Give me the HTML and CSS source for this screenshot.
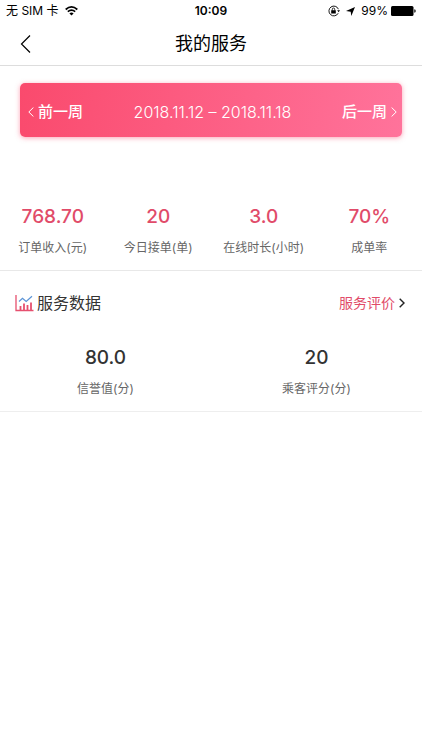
FILE: index.html
```
<!DOCTYPE html>
<html lang="zh-CN">
<head>
<meta charset="utf-8">
<meta name="viewport" content="width=device-width, initial-scale=1">
<title>我的服务</title>
<link rel="stylesheet" href="styles.css">
</head>
<body>
<div class="status">
  <div class="status-side">
    <span>无 SIM 卡</span>
    <svg width="13" height="10" viewBox="0 0 13 10" aria-hidden="true"><path d="M.7 3.5Q6.5-1.6 12.3 3.5M2.8 5.7Q6.5 2.6 10.2 5.7" fill="none" stroke="#000" stroke-width="1.7"/><path d="M4.4 7.4Q6.5 5.8 8.6 7.4L6.5 9.6Z"/></svg>
  </div>
  <time class="clock">10:09</time>
  <div class="status-side status-right">
    <svg class="lock" width="12" height="12" viewBox="0 0 12 12" aria-hidden="true"><path d="M10.4 4.2A4.9 4.9 0 1 0 10.2 8.2" fill="none" stroke="#000" stroke-width=".9"/><path d="M9.2 5.2h2.8l-1.4 2zM3.2 5.2h4.600v3.400H3.200z"/><path d="M4.300 5.6V4.200a1.2 1.2 0 0 1 2.4 0v1.4" fill="none" stroke="#000" stroke-width=".8"/></svg>
    <svg class="arrow" width="9" height="9" viewBox="0 0 9 9" aria-hidden="true"><path d="M9 0 5.300 9 4.700 4.700 0 4.100Z"/></svg>
    <span>99%</span>
    <svg width="25" height="10" viewBox="0 0 25 10" aria-hidden="true"><rect width="22.500" height="10" rx="1.500"/><path d="M23.300 3.300q1.400.2 1.400 1.700t-1.400 1.700z"/></svg>
  </div>
</div>
<header class="nav">
  <button class="back" type="button" aria-label="返回"><svg width="12" height="20" viewBox="0 0 12 20"><path d="M10 1.500 1.500 10 10 18.500" fill="none" stroke="currentColor" stroke-width="1.200"/></svg></button>
  <h1>我的服务</h1>
</header>
<main>
  <div class="week">
    <button type="button"><svg width="6" height="10" viewBox="0 0 6 10" aria-hidden="true"><path d="M5.400.5.800 5l4.600 4.500" fill="none" stroke="currentColor"/></svg>前一周</button>
    <span class="range">2018.11.12 – 2018.11.18</span>
    <button type="button">后一周<svg width="6" height="10" viewBox="0 0 6 10" aria-hidden="true"><path d="M.6.5 5.200 5 .6 9.500" fill="none" stroke="currentColor"/></svg></button>
  </div>
  <dl class="stats income">
    <div><dt>订单收入(元)</dt><dd>768.70</dd></div>
    <div><dt>今日接单(单)</dt><dd>20</dd></div>
    <div><dt>在线时长(小时)</dt><dd>3.0</dd></div>
    <div><dt>成单率</dt><dd>70%</dd></div>
  </dl>
  <section>
    <div class="section-head">
      <svg width="19" height="18" viewBox="0 0 19 18" aria-hidden="true"><path d="M1 1v15.500h17.500" fill="none" stroke="#e6506f" stroke-width="1.300"/><path d="M5.500 16v-4M9 16V9.500M12.500 16v-5M16 16V8.500" stroke="#e6506f" stroke-width="1.800"/><path d="m4 7.500 3.500-3.300 3.700 3.300L17 2.200" fill="none" stroke="#5b94d6" stroke-width="1.200"/></svg>
      <h2>服务数据</h2>
      <a href="#reviews">服务评价<svg width="6" height="10" viewBox="0 0 6 10" aria-hidden="true"><path d="M.7.800 5 5 .7 9.200" fill="none" stroke="#222" stroke-width="1.400"/></svg></a>
    </div>
    <dl class="stats score">
      <div><dt>信誉值(分)</dt><dd>80.0</dd></div>
      <div><dt>乘客评分(分)</dt><dd>20</dd></div>
    </dl>
  </section>
</main>
</body>
</html>
```
FILE: styles.css
```
* {
  box-sizing: border-box;
}

body {
  margin: 0;
  background: #fff;
  color: #333;
  font-family: Inter, "Noto Sans CJK SC", sans-serif;
}

svg {
  display: block;
  flex: none;
}

h1, h2, dl, dd {
  margin: 0;
}

h1, h2 {
  font-weight: 400;
}

button {
  padding: 0;
  border: 0;
  background: none;
  color: inherit;
  font: inherit;
}

.status {
  display: grid;
  grid-template-columns: 1fr auto 1fr;
  align-items: center;
  height: 22px;
  padding: 0 6px;
  color: #000;
  font-size: 12px;
  line-height: 20px;
}

.status-side {
  display: flex;
  align-items: center;
  gap: 6px;
}

.status-right {
  justify-content: flex-end;
  gap: 3px;
}

.arrow {
  margin: 0 3px;
}

.clock {
  font-weight: 600;
}

.nav {
  display: grid;
  grid-template-columns: 40px 1fr 40px;
  align-items: center;
  height: 44px;
  border-bottom: 1px solid #ddd;
  color: #000;
}

.back {
  padding-left: 20px;
}

h1 {
  font-size: 18px;
  line-height: 26px;
  text-align: center;
}

.week {
  display: flex;
  align-items: center;
  justify-content: space-between;
  height: 54px;
  margin: 17px 20px 0;
  padding: 4px 5px 0 8px;
  border-radius: 5px;
  background: linear-gradient(100deg, #fa4a6d, #ff739b);
  box-shadow: 0 1px 5px rgba(250, 74, 109, 0.5);
  color: #fff;
  font-size: 15px;
  line-height: 22px;
}

.week button {
  display: flex;
  align-items: center;
  gap: 4px;
  font-weight: 500;
}

.range {
  font-size: 16px;
  font-weight: 300;
}

.stats {
  display: grid;
  grid-auto-columns: 1fr;
  grid-auto-flow: column;
  text-align: center;
}

.stats div {
  display: flex;
  flex-direction: column-reverse;
  gap: 10px;
}

.stats dt {
  color: #666;
  font-size: 12px;
  line-height: 18px;
}

.stats dd {
  font-size: 19px;
  font-weight: 500;
  line-height: 24px;
}

.income {
  margin-top: 68px;
  padding-bottom: 13px;
  border-bottom: 1px solid #e8e8e8;
}

.income dd {
  color: #e14b69;
}

.section-head {
  display: flex;
  align-items: center;
  gap: 3px;
  padding: 20px 17px 0 15px;
}

h2 {
  flex: 1;
  font-size: 16px;
  line-height: 24px;
}

.section-head a {
  display: flex;
  align-items: center;
  gap: 4px;
  color: #e14b69;
  font-size: 14px;
  line-height: 24px;
  text-decoration: none;
}

.score {
  padding: 31px 0 13px;
  border-bottom: 1px solid #eee;
}
```
